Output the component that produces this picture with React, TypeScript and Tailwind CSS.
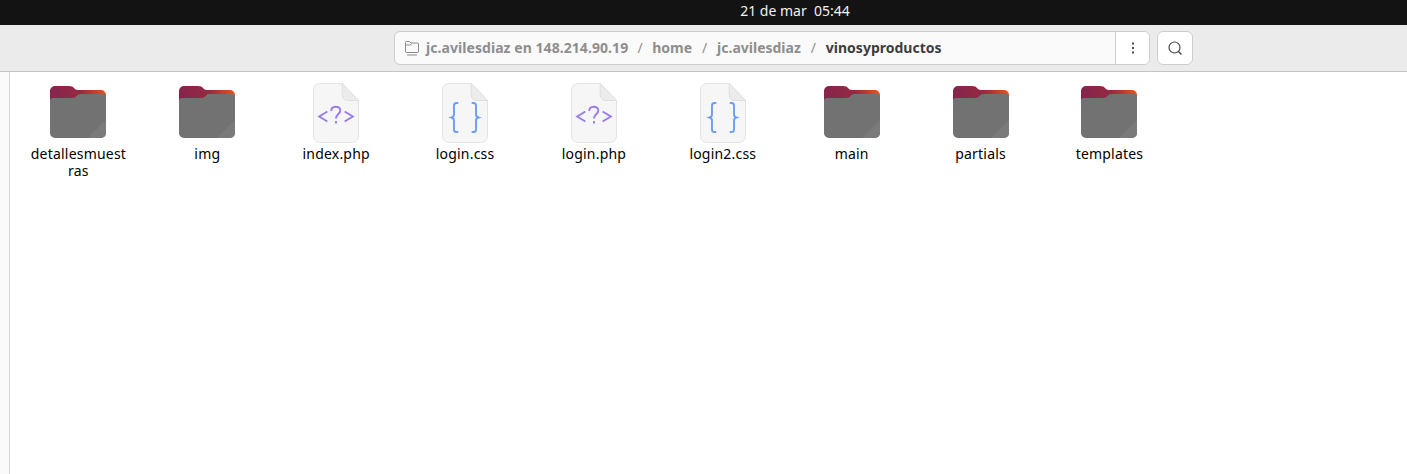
import React from 'react';

const FONT = "font-['Noto_Sans','Open_Sans',sans-serif]";

const FolderIcon: React.FC<{ id: string }> = ({ id }) => (
  <svg width="58" height="54" viewBox="0 0 58 54" className="block">
    <defs>
      <linearGradient id={`${id}-tab`} x1="0" y1="0" x2="1" y2="0">
        <stop offset="0" stopColor="#86244f" />
        <stop offset="0.55" stopColor="#96293f" />
        <stop offset="1" stopColor="#e9541d" />
      </linearGradient>
    </defs>
    <path d="M1 6a5 5 0 0 1 5-5h14c3 0 4 .8 5 2 1 1.200 2 2 4 2h23a5 5 0 0 1 5 5v12H1z" fill={`url(#${id}-tab)`} />
    <path d="M1 16a3 3 0 0 1 3-3h19c2.500 0 3.500-.8 4.500-2 1-1.300 2-2 4-2H54a3 3 0 0 1 3 3v36a5 5 0 0 1-5 5H6a5 5 0 0 1-5-5z" fill="#727272" />
    <path d="M57 35v13a5 5 0 0 1-5 5H39z" fill="#7a7a7a" />
  </svg>
);

const PageIcon: React.FC<{ kind: 'php' | 'css' }> = ({ kind }) => (
  <svg width="46" height="60" viewBox="0 0 48 60" preserveAspectRatio="none" className="block">
    <path d="M6.500 .5h24L47.500 17.500V53a6.500 6.500 0 0 1-6.500 6.500H7A6.500 6.500 0 0 1 .5 53V7A6.500 6.500 0 0 1 6.500 .5z" fill="#f6f6f6" stroke="#e3e3e3" />
    <path d="M30.500 .5V12a5.500 5.500 0 0 0 5.500 5.500h11.500z" fill="#ececec" stroke="#dedede" />
    {kind === 'php' ? (
      <g fill="none" stroke="#9a7cec" strokeWidth="2">
        <path d="M15 28.500l-8.500 5 8.500 5" />
        <path d="M33 28.500l8.500 5-8.500 5" />
        <path d="M19 28c0-5.500 9.500-5.500 9.500-.5 0 3.500-4.500 3.500-4.500 8" />
        <path d="M24 38v2.500" />
      </g>
    ) : (
      <g fill="none" stroke="#6f9df2" strokeWidth="2">
        <path d="M17 20h-2c-1.500 0-2.500 1-2.500 2.500v9c0 1.500-.8 2.500-2.500 3 1.700.5 2.500 1.500 2.500 3v9c0 1.500 1 2.500 2.500 2.500h2" />
        <path d="M31 20h2c1.500 0 2.500 1 2.500 2.500v9c0 1.500.8 2.500 2.500 3-1.700.5-2.500 1.500-2.500 3v9c0 1.500-1 2.500-2.500 2.500h-2" />
      </g>
    )}
  </svg>
);

type Item = { name: string; type: 'folder' | 'php' | 'css' };

const items: Item[] = [
  { name: 'detallesmuestras', type: 'folder' },
  { name: 'img', type: 'folder' },
  { name: 'index.php', type: 'php' },
  { name: 'login.css', type: 'css' },
  { name: 'login.php', type: 'php' },
  { name: 'login2.css', type: 'css' },
  { name: 'main', type: 'folder' },
  { name: 'partials', type: 'folder' },
  { name: 'templates', type: 'folder' },
];

export default function App() {
  return (
    <div className={`${FONT} w-[1407px] h-[474px] flex flex-col bg-white overflow-hidden`}>
      <div className="h-[25px] bg-[#131313] flex items-center justify-center pb-[4px] pl-[183px]">
        <span className="text-[14px] text-[#f0f0f0] whitespace-pre leading-none">21 de mar  05:44</span>
      </div>

      <div className="h-[47px] bg-[#ebebeb] border-b border-[#c4c4c4] flex items-start pt-[6px] pl-[394px] gap-[7px]">
        <div className="w-[756px] h-[34px] flex bg-[#fafafa] border border-[#cdcdcd] rounded-[6px] overflow-hidden">
          <div className="flex-1 flex items-center pl-[9px] pb-[1px] text-[14px] font-bold text-[#8e8e8e] whitespace-nowrap">
            <svg width="16" height="16" viewBox="0 0 16 16" fill="none" stroke="#8a8a8a" className="mr-[6px] shrink-0">
              <path d="M1.500 11.500v-9a1 1 0 0 1 1-1h3l1.500 1.500h6.500a1 1 0 0 1 1 1v7.500a1 1 0 0 1-1 1h-11a1 1 0 0 1-1-1z" />
              <path d="M1.500 5h5l1-1.500M3 15h10" />
            </svg>
            <span className="tracking-[0.06px]">jc.avilesdiaz en 148.214.90.19</span>
            <span className="font-normal w-[24px] text-center">/</span>
            <span>home</span>
            <span className="font-normal w-[25px] text-center">/</span>
            <span>jc.avilesdiaz</span>
            <span className="font-normal w-[25px] text-center">/</span>
            <span className="text-[#3d3d3d]">vinosyproductos</span>
          </div>
          <div className="w-[34px] bg-white border-l border-[#cdcdcd] flex items-center justify-center">
            <svg width="4" height="12" viewBox="0 0 4 12" fill="#4a4a4a">
              <rect x="1" y="0.500" width="2" height="2" />
              <rect x="1" y="5" width="2" height="2" />
              <rect x="1" y="9.500" width="2" height="2" />
            </svg>
          </div>
        </div>
        <div className="w-[36px] h-[34px] bg-white border border-[#cdcdcd] rounded-[6px] flex items-center justify-center">
          <svg width="16" height="16" viewBox="0 0 16 16" fill="none" stroke="#4a4a4a" strokeWidth="1.200">
            <circle cx="7.500" cy="7.500" r="5.500" />
            <path d="M11.500 11.500l3 3" strokeWidth="1.500" />
          </svg>
        </div>
      </div>

      <div className="flex-1 flex">
        <div className="w-[10px] bg-[#fafafa] border-r border-[#d6d6d6]" />
        <div className="flex-1 pl-[4px] pt-[11px]">
          <div className="grid grid-cols-[repeat(9,128.875px)] items-start">
            {items.map((item) => (
              <div key={item.name} className="flex flex-col items-center">
                <div className="h-[60px] flex items-end justify-center">
                  {item.type === 'folder' ? (
                    <div className="pb-[4px]">
                      <FolderIcon id={item.name} />
                    </div>
                  ) : (
                    <PageIcon kind={item.type} />
                  )}
                </div>
                <div className="w-[97px] mt-[2px] text-[14px] tracking-[0.2px] leading-[17px] text-black text-center break-all">
                  {item.name}
                </div>
              </div>
            ))}
          </div>
        </div>
      </div>
    </div>
  );
}
